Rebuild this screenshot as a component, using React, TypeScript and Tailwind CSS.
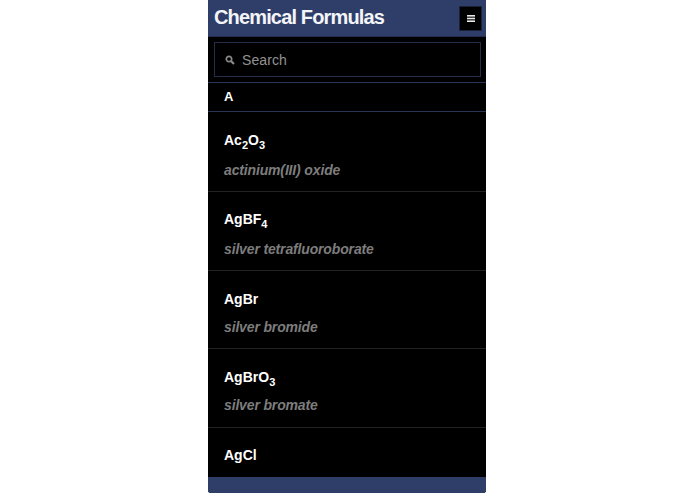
import type { ReactNode } from 'react';

const subClass = 'static align-[-4px] text-[11px] leading-none';

const formulas: { id: string; formula: ReactNode; name?: string; h: string; top: string; gap: string }[] = [
  {
    id: 'ac2o3',
    formula: (
      <>
        Ac<sub className={subClass}>2</sub>O<sub className={subClass}>3</sub>
      </>
    ),
    name: 'actinium(III) oxide',
    h: 'h-[80px]',
    top: 'mt-[18px]',
    gap: 'mt-[10px]',
  },
  {
    id: 'agbf4',
    formula: (
      <>
        AgBF<sub className={subClass}>4</sub>
      </>
    ),
    name: 'silver tetrafluoroborate',
    h: 'h-[79px]',
    top: 'mt-[17px]',
    gap: 'mt-[10px]',
  },
  { id: 'agbr', formula: 'AgBr', name: 'silver bromide', h: 'h-[78px]', top: 'mt-[18px]', gap: 'mt-[8px]' },
  {
    id: 'agbro3',
    formula: (
      <>
        AgBrO<sub className={subClass}>3</sub>
      </>
    ),
    name: 'silver bromate',
    h: 'h-[79px]',
    top: 'mt-[18px]',
    gap: 'mt-[8px]',
  },
  { id: 'agcl', formula: 'AgCl', h: 'h-[49px]', top: 'mt-[17px]', gap: '' },
];

export default function App() {
  return (
    <div className="h-[494px] w-[695px] overflow-hidden bg-white font-['Liberation_Sans',Arial,sans-serif]">
      <div className="ml-[208px] flex h-[493px] w-[278px] flex-col overflow-hidden rounded-b-[3px] bg-black">
        <header className="flex h-[37px] shrink-0 items-center justify-between border-b border-[#232c4d] bg-[#2f3e69] pb-[2px] pl-[6px] pr-[4px]">
          <h1 className="text-[20px] font-bold leading-none tracking-[-0.85px] text-[#f4f5f8]">
            Chemical Formulas
          </h1>
          <button className="mt-[2px] flex h-[25px] w-[23px] items-center justify-center border border-[#1b2238] bg-black text-white">
            <svg width="8" height="7" viewBox="0 0 8 7" fill="#e8e8e8">
              <rect width="8" height="1.6" />
              <rect y="2.7" width="8" height="1.6" />
              <rect y="5.4" width="8" height="1.6" />
            </svg>
          </button>
        </header>

        <div className="h-[45px] shrink-0 pl-[6px] pr-[5px] pt-[5px]">
          <div className="flex h-[35px] items-center border border-[#242c48] pl-[10px]">
            <svg width="10" height="10" viewBox="0 0 10 10" fill="none" stroke="#8a8a8a">
              <circle cx="4" cy="4" r="2.7" strokeWidth="1.7" />
              <path d="M6 6l3 3" strokeWidth="2.2" />
            </svg>
            <span className="ml-[7px] mt-[2px] text-[14px] tracking-[0.1px] text-[#929292]">Search</span>
          </div>
        </div>

        <div className="flex h-[30px] shrink-0 items-center border-y border-[#2a3455] pl-[16px] text-[13px] font-bold text-white">
          A
        </div>

        <ul className="flex-1">
          {formulas.map((item) => (
            <li
              key={item.id}
              className={`flex flex-col border-b border-[#222] pl-[16px] ${item.h} last:border-b-0`}
            >
              <div className={`${item.top} h-[20px] whitespace-nowrap text-[14px] font-bold leading-[20px] text-white`}>
                {item.formula}
              </div>
              {item.name ? (
                <div className={`${item.gap} text-[14px] font-bold italic leading-[20px] tracking-[-0.15px] text-[#7d7d7d]`}>
                  {item.name}
                </div>
              ) : null}
            </li>
          ))}
        </ul>

        <footer className="h-[16px] shrink-0 bg-[#2f3e69]" />
      </div>
    </div>
  );
}
